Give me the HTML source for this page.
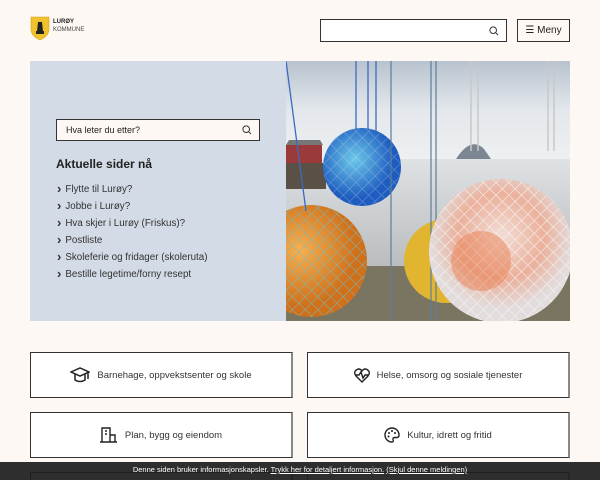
<!DOCTYPE html>
<html><head><meta charset="utf-8"><style>
*{box-sizing:border-box;margin:0;padding:0}
html{width:600px;height:480px;overflow:hidden}
body{width:600px;height:480px;overflow:hidden;background:#fdf8f3;font-family:"Liberation Sans",sans-serif;color:#222;position:relative}
.abs{position:absolute}
.hsearch{left:320px;top:19px;width:187px;height:23px;border:1px solid #333;background:#fff}
.menu{left:517px;top:19px;width:53px;height:23px;border:1px solid #333;font-size:10px;line-height:21px;text-align:center;background:#fdf8f3}
.hero{left:30px;top:61px;width:256px;height:260px;background:#d3dbe6}
.s2{left:56px;top:119px;width:204px;height:22px;border:1px solid #333;background:#fdf8f3;font-size:9px;line-height:20px;padding-left:9px}
h2{position:absolute;left:56px;top:157px;font-size:12px;font-weight:bold}
ul{position:absolute;left:57px;top:181px;list-style:none;font-size:9.8px;color:#333}
li{height:17px;line-height:14px}
li:before{content:"›";font-weight:bold;font-size:13px;margin-right:4px;position:relative;top:1px}
.card{position:absolute;width:263px;height:46px;border:1px solid #333;border-right:2px solid #888;background:#fff;font-size:9.5px;display:flex;align-items:center;justify-content:center;gap:7px;color:#333}
.cookie{left:0;top:462px;width:600px;height:18px;background:rgba(30,30,30,.93);color:#fff;font-size:7.5px;text-align:center;line-height:16px}
.cookie u{color:#fff}
</style></head><body>
<svg class="abs" style="left:30px;top:16px" width="20" height="25" viewBox="0 0 20 25"><path d="M1 1H19V13Q19 20 10 24Q1 20 1 13Z" fill="#f2c12e" stroke="#d9a416" stroke-width=".6"/><path d="M8 6h4l1 10H7z" fill="#222"/><rect x="6" y="15" width="8" height="3" fill="#222"/></svg>
<div class="abs" style="left:53px;top:19px;font-size:6px;font-weight:bold;line-height:7px">LURØY</div>
<div class="abs" style="left:53px;top:27px;font-size:6px;line-height:7px;color:#444">KOMMUNE</div>
<div class="abs hsearch"><svg class="abs" style="right:7px;top:6px" width="10" height="10" viewBox="0 0 10 10"><circle cx="4.2" cy="4.2" r="3.3" fill="none" stroke="#333" stroke-width="1"/><path d="M6.7 6.7L9 9" stroke="#333"/></svg></div>
<div class="abs menu">☰ Meny</div>
<div class="abs hero"></div>
<div class="abs s2">Hva leter du etter?<svg class="abs" style="right:7px;top:5px" width="10" height="10" viewBox="0 0 10 10"><circle cx="4.2" cy="4.2" r="3.3" fill="none" stroke="#333"/><path d="M6.7 6.7L9 9" stroke="#333"/></svg></div>
<h2>Aktuelle sider nå</h2>
<ul><li>Flytte til Lurøy?</li><li>Jobbe i Lurøy?</li><li>Hva skjer i Lurøy (Friskus)?</li><li>Postliste</li><li>Skoleferie og fridager (skoleruta)</li><li>Bestille legetime/forny resept</li></ul>
<svg class="abs" style="left:286px;top:61px" width="284" height="260" viewBox="0 0 284 260">
<defs><linearGradient id="sk" x1="0" y1="0" x2="0" y2="1"><stop offset="0" stop-color="#b8c3cf"/><stop offset=".5" stop-color="#e4e8ec"/><stop offset="1" stop-color="#eef0f2"/></linearGradient>
<linearGradient id="wt" x1="0" y1="0" x2="0" y2="1"><stop offset="0" stop-color="#dfe2e5"/><stop offset="1" stop-color="#b9bcbd"/></linearGradient>
<radialGradient id="or" cx=".4" cy=".4"><stop offset="0" stop-color="#f6b050"/><stop offset="1" stop-color="#d0701a"/></radialGradient>
<radialGradient id="bl" cx=".4" cy=".4"><stop offset="0" stop-color="#6cc8ea"/><stop offset="1" stop-color="#1e5cc0"/></radialGradient>
<radialGradient id="pk" cx=".5" cy=".4"><stop offset="0" stop-color="#f3ddd6"/><stop offset=".6" stop-color="#ebb09a"/><stop offset="1" stop-color="#e2dcdc"/></radialGradient>
<pattern id="net" width="9" height="9" patternUnits="userSpaceOnUse" patternTransform="rotate(45)"><path d="M0 0H9M0 0V9" stroke="#f4f4f4" stroke-width="1.3" fill="none"/></pattern>
<pattern id="net2" width="9" height="9" patternUnits="userSpaceOnUse" patternTransform="rotate(45)"><path d="M0 0H9M0 0V9" stroke="#7bb" stroke-width="1" fill="none"/></pattern></defs>
<rect width="284" height="100" fill="url(#sk)"/>
<rect y="98" width="284" height="110" fill="url(#wt)"/>
<rect y="205" width="284" height="55" fill="#7a7560"/>
<path d="M170 98Q185 75 198 88L205 98Z" fill="#7c8592"/>
<rect x="0" y="84" width="36" height="18" fill="#9a3a3a"/><path d="M0 84L3 79H34L37 84Z" fill="#777"/>
<rect x="0" y="102" width="40" height="26" fill="#5a5046"/>
<circle cx="160" cy="200" r="42" fill="#e2b530"/>
<circle cx="25" cy="200" r="56" fill="url(#or)"/><circle cx="25" cy="200" r="56" fill="url(#net2)"/>
<path d="M70 0V70M82 0V70M0 0L20 150M90 0V70" stroke="#3a6bc0" stroke-width="1.3"/>
<circle cx="76" cy="106" r="39" fill="url(#bl)"/><circle cx="76" cy="106" r="39" fill="url(#net)" opacity=".3"/>
<path d="M105 0V260M145 0V260M150 0V260" stroke="#5a7f9a" stroke-width="1.2"/>
<path d="M262 0V90M268 0V90M185 0V90M192 0V90" stroke="#c8c8c8" stroke-width="1.5"/>
<circle cx="215" cy="190" r="72" fill="url(#pk)"/><circle cx="215" cy="190" r="72" fill="url(#net)" opacity=".9"/>
<circle cx="195" cy="200" r="30" fill="#e87a4a" opacity=".45"/>
</svg>
<div class="card" style="left:30px;top:352px"><svg width="20" height="18" viewBox="0 0 20 18"><path d="M1 6L10 2L19 6L10 10Z M5 8V14Q10 17 15 14V8 M18 7V13" fill="none" stroke="#222" stroke-width="1.5"/></svg>Barnehage, oppvekstsenter og skole</div>
<div class="card" style="left:307px;top:352px"><svg width="16" height="15" viewBox="0 0 16 15"><path d="M8 14L2 8Q-1 4 3 1.5Q6 0 8 3Q10 0 13 1.5Q17 4 14 8Z M2 7H5L7 4L9 10L11 7H14" fill="none" stroke="#222" stroke-width="1.4"/></svg>Helse, omsorg og sosiale tjenester</div>
<div class="card" style="left:30px;top:412px"><svg width="18" height="16" viewBox="0 0 18 16"><path d="M2 15V1H10V15 M10 8H15V15 M0 15H17 M5 4H7M5 7H7" fill="none" stroke="#222" stroke-width="1.4"/></svg>Plan, bygg og eiendom</div>
<div class="card" style="left:307px;top:412px"><svg width="16" height="16" viewBox="0 0 16 16"><path d="M8 1A7 7 0 1 0 8 15Q10 15 9 12.5Q8.5 10.5 11 10.5H13Q15 10.5 15 8A7 7 0 0 0 8 1Z" fill="none" stroke="#222" stroke-width="1.4"/><circle cx="5" cy="6" r="1" fill="#222"/><circle cx="8" cy="4" r="1" fill="#222"/><circle cx="11" cy="6" r="1" fill="#222"/><circle cx="4.5" cy="9.5" r="1" fill="#222"/></svg>Kultur, idrett og fritid</div>
<div class="card" style="left:30px;top:472px;height:8px;border-bottom:0"></div>
<div class="card" style="left:307px;top:472px;height:8px;border-bottom:0"></div>
<div class="abs cookie">Denne siden bruker informasjonskapsler. <u>Trykk her for detaljert informasjon.</u> <u>(Skjul denne meldingen)</u></div>
</body></html>
